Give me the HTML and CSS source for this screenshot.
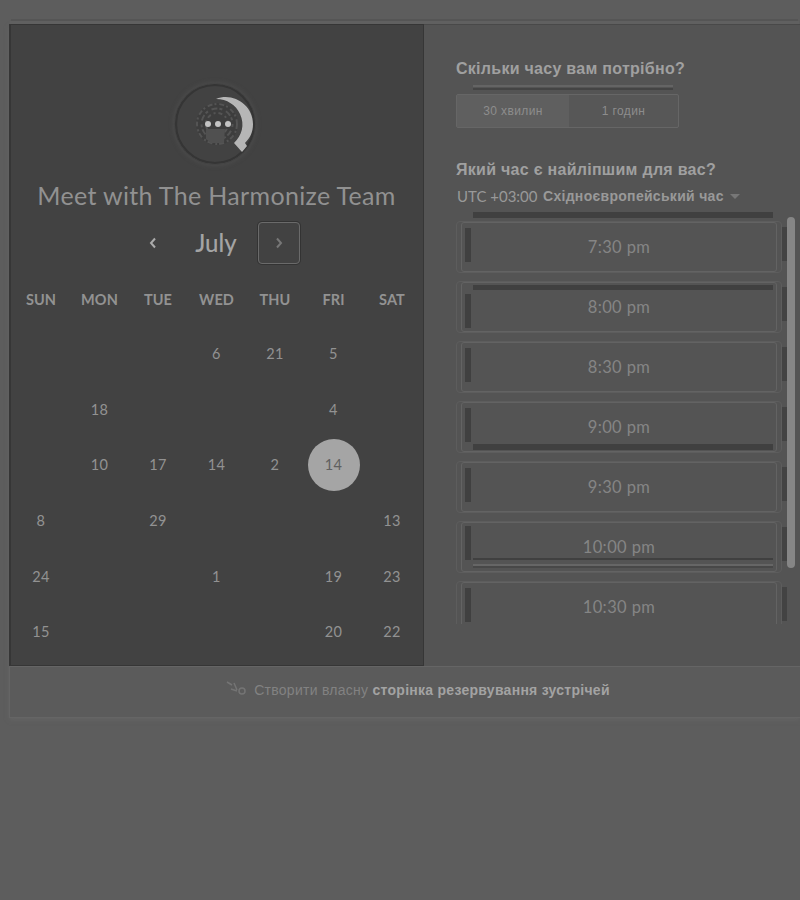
FILE: index.html
```
<!DOCTYPE html>
<html lang="uk">
<head>
<meta charset="utf-8">
<title>Meet with The Harmonize Team</title>
<link rel="stylesheet" href="styles.css">
</head>
<body>
<main class="card">
  <section class="calendar">
    <svg class="avatar" width="82" height="82" viewBox="0 0 82 82">
      <circle cx="41" cy="41" r="40" fill="#424242" stroke="#4a4a4a"/>
      <circle cx="41" cy="41" r="39" fill="none" stroke="#353535" stroke-width="2.2"/>
      <circle cx="43" cy="41" r="21" fill="#3d3d3d"/>
      <g fill="none" stroke="#545454" stroke-width="2">
        <circle cx="43" cy="41" r="20" stroke-dasharray="5 2 2 3"/>
        <circle cx="43" cy="41" r="15.500" stroke-dasharray="3 4 6 2"/>
        <circle cx="43" cy="41" r="11" stroke-dasharray="2 3 4 3"/>
      </g>
      <path d="M32 46h19l-1 14H37l-5-4z" fill="#505050"/>
      <path d="M42 16C59 9 79 22 79 41c0 8-3 14-8 19l2 3-5 6-8-9C68 52 71 42 66 31 62 22 53 16 42 16z" fill="#b6b6b6"/>
      <g fill="#c4c4c4"><circle cx="34" cy="41" r="3"/><circle cx="44" cy="41" r="3"/><circle cx="54" cy="41" r="3"/></g>
    </svg>
    <h1 class="title"><span>Meet with The Harmonize Team</span></h1>
    <div class="month">
      <button class="arrow"><svg width="8" height="12" viewBox="0 0 8 12"><path d="M6 1.500L2 6l4 4.500"/></svg></button>
      <span class="name">July</span>
      <button class="arrow next"><svg width="8" height="12" viewBox="0 0 8 12"><path d="M2 1.500L6 6l-4 4.500"/></svg></button>
    </div>
    <div class="grid heads"><span>SUN</span><span>MON</span><span>TUE</span><span>WED</span><span>THU</span><span>FRI</span><span>SAT</span></div>
    <div class="grid days">
      <span></span><span></span><span></span><span>6</span><span>21</span><span>5</span><span></span>
      <span></span><span>18</span><span></span><span></span><span></span><span>4</span><span></span>
      <span></span><span>10</span><span>17</span><span>14</span><span>2</span><span><b class="picked">14</b></span><span></span>
      <span>8</span><span></span><span>29</span><span></span><span></span><span></span><span>13</span>
      <span>24</span><span></span><span></span><span>1</span><span></span><span>19</span><span>23</span>
      <span>15</span><span></span><span></span><span></span><span></span><span>20</span><span>22</span>
    </div>
  </section>
  <section class="times">
    <h2>Скільки часу вам потрібно?</h2>
    <div class="rule"></div>
    <div class="duration"><span class="on">30 хвилин</span><span>1 годин</span></div>
    <h2 class="best">Який час є найліпшим для вас?</h2>
    <div class="zone"><span class="utc">UTC +03:00</span><b>Східноєвропейський час</b><i class="caret"></i></div>
    <div class="scroller">
      <div class="slots">
        <div class="slot"><span>7:30 pm</span></div>
        <div class="slot shade-top"><span>8:00 pm</span></div>
        <div class="slot"><span>8:30 pm</span></div>
        <div class="slot shade-bottom"><span>9:00 pm</span></div>
        <div class="slot"><span>9:30 pm</span></div>
        <div class="slot lined"><span>10:00 pm</span></div>
        <div class="slot"><span>10:30 pm</span></div>
      </div>
      <div class="bar"></div>
    </div>
  </section>
  <footer class="foot"><svg class="mark" width="24" height="20" viewBox="0 0 24 20"><path d="M1 2l5 3M8 3l3 7M5 9l6 2"/><circle cx="16" cy="11" r="3"/></svg><span>Створити власну <b>сторінка резервування зустрічей</b></span></footer>
</main>
</body>
</html>
```
FILE: styles.css
```
* { box-sizing: border-box; }
body { margin: 0; height: 900px; padding: 24px 0 0 9px; overflow: hidden; background: #5d5d5d; color: #a0a0a0; font-family: "Liberation Sans", sans-serif; }
h1, h2 { margin: 0; }
.card { display: grid; grid-template-columns: 415px 376px; grid-template-rows: 642px 52px; box-shadow: 0 -4px 0 -1px #606060, 0 -7px 0 -2px #555, 0 2px 4px #646464; }
.calendar { display: flex; flex-direction: column; align-items: center; padding: 58px 1px 0 0; background: #424242; border: 1px solid #363636; border-width: 1px 1px 1px 2px; font-family: Lato, sans-serif; }
.avatar { display: block; flex: none; margin-right: 3px; border-radius: 50%; box-shadow: 0 0 5px #505050; }
.title { height: 40px; margin-top: 10px; font-size: 25px; line-height: 40px; font-weight: 400; letter-spacing: .33px; color: #919191; white-space: nowrap; }
.month { display: flex; align-items: center; height: 44px; margin-top: 6px; gap: 20px; margin-right: 1px; }
.name { width: 44px; text-align: center; font-size: 24px; line-height: 30px; font-weight: 500; color: #a4a4a4; }
.arrow { display: flex; align-items: center; justify-content: center; width: 42px; height: 42px; padding: 0; border: 0; background: none; color: #ababab; }
.arrow svg { fill: none; stroke: currentColor; stroke-width: 2; }
.next { border: 1px solid #6a6a6a; border-radius: 4px; color: #777; box-shadow: 0 0 0 1px #333; }
.grid { display: grid; grid-template-columns: repeat(7, 58.500px); width: 409.500px; }
.grid span { display: flex; align-items: center; justify-content: center; }
.heads { height: 30px; margin-top: 19px; font-size: 14.500px; font-weight: 700; color: #929292; letter-spacing: .1px; }
.days { grid-auto-rows: 55.600px; margin-top: 12px; font-size: 14.500px; color: #929292; letter-spacing: .4px; }
.picked { display: flex; align-items: center; justify-content: center; flex: none; width: 52px; height: 52px; border-radius: 50%; background: #a5a5a5; color: #606060; font-weight: 400; }
.times { padding: 33px 0 0 32px; background: #545454; border-top: 1px solid #494949; }
h2 { height: 22px; font-size: 16px; line-height: 22px; letter-spacing: .28px; white-space: nowrap; }
.rule { width: 200px; height: 5px; margin: 5px 0 0 17px; border-top: 2px solid #646464; border-bottom: 2px solid #444; }
.duration { display: grid; grid-template-columns: 112px 1fr; width: 223px; height: 34px; margin-top: 4px; border: 1px solid #666; border-radius: 2px; background: #575757; font-size: 12px; letter-spacing: .4px; color: #8d8d8d; }
.duration span { display: flex; align-items: center; justify-content: center; }
.duration .on { background: #5f5f5f; }
.best { margin-top: 31px; }
.zone { display: flex; align-items: center; height: 20px; margin-top: 5px; font-size: 14px; letter-spacing: .3px; color: #999; white-space: nowrap; }
.utc { width: 87px; padding-left: 1px; font-family: Lato, sans-serif; font-size: 15px; letter-spacing: 0; }
.caret { margin-left: 6px; border: 5px solid transparent; border-top-color: #777; border-bottom: 0; }
.scroller { display: flex; height: 412px; margin-top: 6px; }
.slots { display: flex; flex-direction: column; gap: 8px; width: 331px; height: 412px; padding: 9px 5px 0 0; overflow: hidden; background: linear-gradient(#404040, #404040) 17px 0 / 300px 6px no-repeat, linear-gradient(transparent 15px, #434343 15px 49px, transparent 49px) 326px 0 / 5px 60px repeat-y; }
.slot { flex: none; height: 52px; padding: 0 4px; border: 1px solid #5d5d5d; border-radius: 4px; }
.slot span { display: flex; align-items: center; justify-content: center; height: 50px; border: 1px solid #636363; border-radius: 3px; font-family: Lato, sans-serif; font-size: 16.500px; letter-spacing: .4px; color: #858585; background: linear-gradient(#404040, #404040) 3px 5px / 6px 34px no-repeat; }
.shade-top span { background: linear-gradient(#404040, #404040) 3px 11px / 6px 34px no-repeat, linear-gradient(#404040, #404040) 11px 2px / 300px 5px no-repeat; }
.shade-bottom span { background: linear-gradient(#404040, #404040) 3px 5px / 6px 34px no-repeat, linear-gradient(#404040, #404040) 11px 41px / 300px 6px no-repeat; }
.lined span { background: linear-gradient(#404040, #404040) 3px 3px / 6px 34px no-repeat, linear-gradient(#404040 2px, transparent 2px 6px, #666 6px 8px, #484848 8px) 11px 35px / 300px 10px no-repeat; }
.bar { width: 8px; height: 351px; margin-top: 5px; border-radius: 4px; background: #868686; }
.foot { grid-column: 1 / 3; display: flex; justify-content: center; padding: 13px 0 0 26px; background: #5b5b5b; border: 1px solid #656565; border-width: 1px 0 1px 1px; font-size: 14px; line-height: 20px; letter-spacing: .27px; color: #828282; white-space: nowrap; }
.foot b { color: #a3a3a3; }
.mark { margin-right: 4px; fill: none; stroke: #747474; stroke-width: 1.5; }
```
